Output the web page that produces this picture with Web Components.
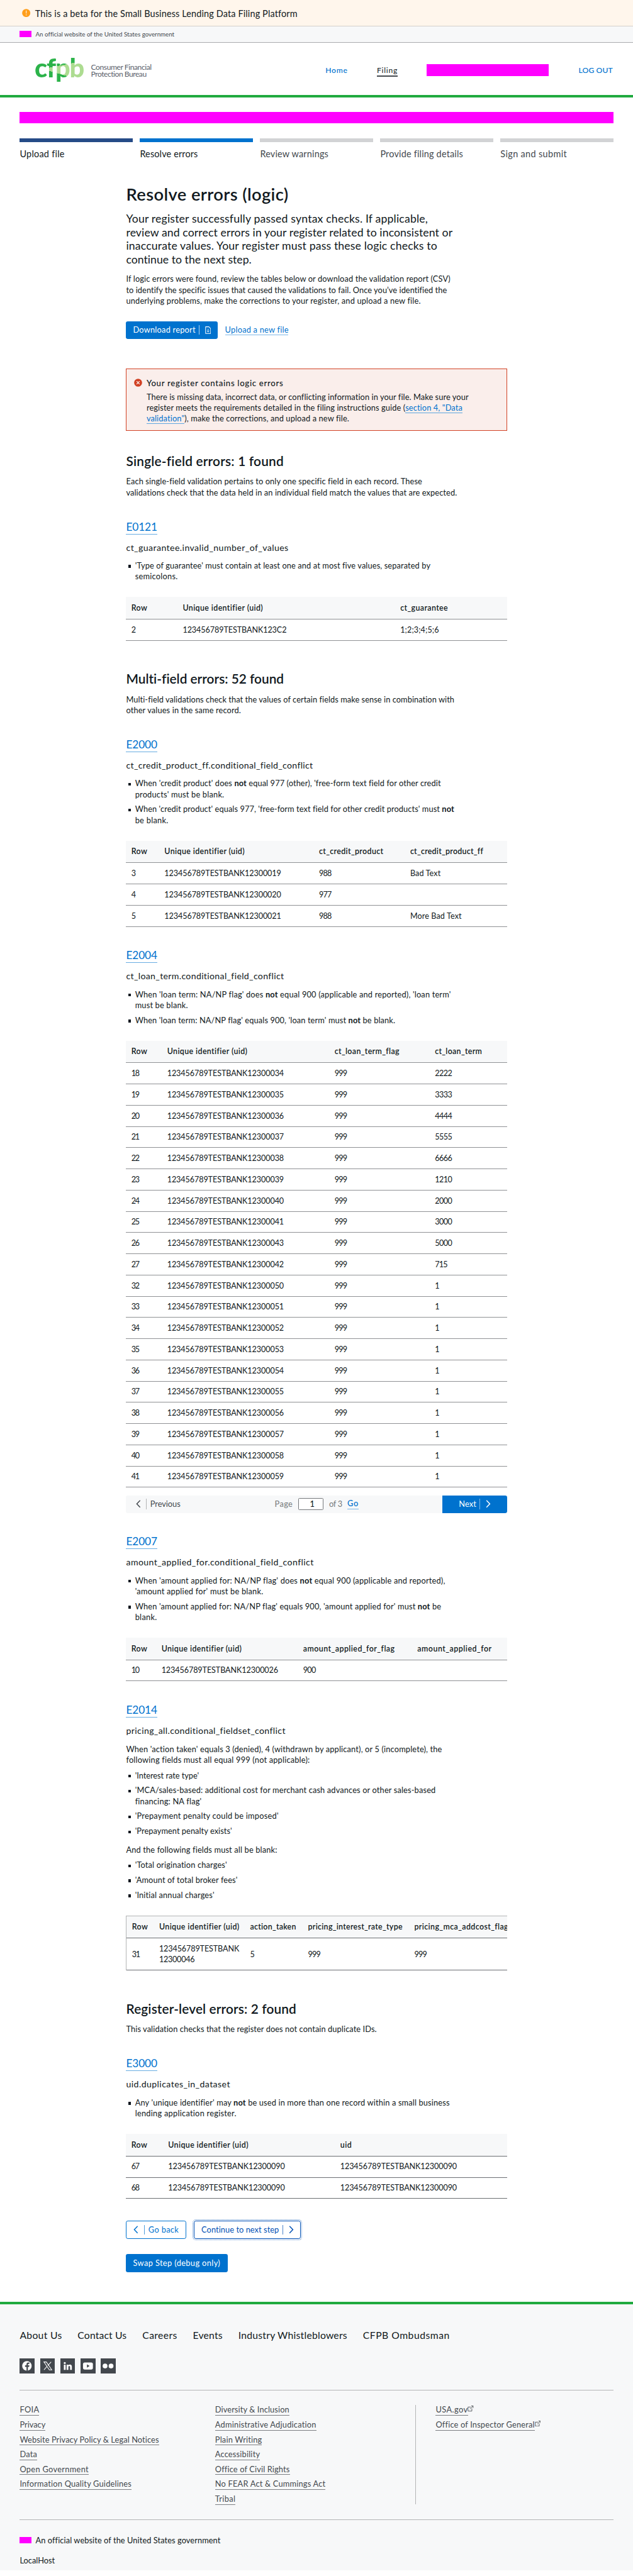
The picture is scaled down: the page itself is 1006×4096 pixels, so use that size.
<!DOCTYPE html>
<html lang="en">
<head>
<meta charset="utf-8">
<title>Small Business Lending Data Filing Platform</title>
<style>
/* 1rem stands for 100 design pixels */
html{font-size:78.58px;background:#fff}
body{margin:0;font-family:Lato,"Noto Sans",sans-serif;font-size:.163rem;line-height:.22rem;color:#101820;overflow-x:hidden}
</style>
</head>
<body>
<filing-page></filing-page>
<script>
const U = 0.7858;
const el = (name, html, ready) => customElements.define(name, class extends HTMLElement {
  connectedCallback() {
    if (this.shadowRoot) return;
    const root = this.attachShadow({ mode: 'open' });
    const t = document.createElement('template');
    t.innerHTML = typeof html === 'function' ? html(this) : html;
    root.append(t.content.cloneNode(true));
    if (ready) ready(this, root);
  }
});
const T = (text, w, extra = '') => `<fit-text w="${w}" ${extra}>${text}</fit-text>`;
const LINK = 'a{color:#0072ce;text-decoration:none;border-bottom:1px solid #5fa6df}';

/* A line of text tracked to a given width in design pixels */
el('fit-text', '<style>:host{display:block;width:max-content;white-space:nowrap}</style><slot></slot>', host => {
  const w = parseFloat(host.getAttribute('w')) * U;
  const n = host.textContent.length;
  if (!w || n < 2) return;
  host.style.letterSpacing = '0px';
  const natural = host.getBoundingClientRect().width;
  host.style.letterSpacing = ((w - natural) / (n - 1)).toFixed(4) + 'px';
  host.style.marginRight = (-(w - natural) / (n - 1)).toFixed(4) + 'px';
});

el('beta-banner', `<style>
:host{display:flex;align-items:center;height:.52rem;padding:0 .45rem;gap:.09rem;background:#fff6ec;border-bottom:1px solid #d3cfca;font-size:.184rem}
svg{width:.17rem;height:.17rem}
fit-text{padding-top:.02rem}</style>
<svg viewBox="0 0 17 17"><circle cx="8.5" cy="8.5" r="8.3" fill="#ff9e1b"/><path d="M8.5 3.6v6" stroke="#fff6ec" stroke-width="1.4"/><circle cx="8.5" cy="12.4" r="1" fill="#fff6ec"/></svg>
${T('This is a beta for the Small Business Lending Data Filing Platform', 530)}`);

el('gov-line', h => `<style>
:host{display:flex;align-items:center;gap:.08rem;box-sizing:border-box}
i{width:.24rem;height:.13rem;background:#f0f}</style><i></i>${T('An official website of the United States government', h.getAttribute('w'))}`);

el('site-logo', `<style>
:host{display:flex;align-items:flex-start;gap:.13rem;height:.51rem}
.m{font-weight:900;font-size:.53rem;line-height:.5rem;height:.7rem;width:1.01rem;color:transparent;margin-top:-.053rem;
background:conic-gradient(from 78.7deg at .17rem .275rem,#addc91 0 28deg,#2cb34a 28deg);-webkit-background-clip:text;background-clip:text}
.n{color:#5b616b;font-size:.154rem;line-height:.145rem;padding-top:.112rem}</style>
<div class="m">${T('cfpb', 101)}</div><div class="n">${T('Consumer Financial', 123)}${T('Protection Bureau', 113)}</div>`);

el('site-header', `<style>
:host{display:flex;justify-content:space-between;align-items:flex-start;box-sizing:border-box;height:1.108rem;padding:.305rem .41rem 0 .7rem;border-bottom:4px solid #20aa3f}
nav{display:flex;align-items:center;gap:.6rem;color:#0072ce;font-weight:500;font-size:.155rem;height:.5rem}
.on{color:#101820;font-weight:400;border-bottom:2px solid #43484e;padding-top:.02rem}
i{width:2.47rem;height:.25rem;background:#f0f}</style>
<site-logo></site-logo>
<nav>${T('Home', 44)}${T('Filing', 41, 'class="on"')}<i></i>${T('LOG OUT', 69)}</nav>`);

el('step-bar', `<style>
:host{display:grid;grid-template-columns:repeat(5,1fr);gap:.15rem;font-size:.184rem;line-height:.24rem;color:#43484e}
div{border-top:.08rem solid #d2d3d5;padding-top:.13rem}
.a{border-color:#254b87;color:#101820}.b{border-color:#0072ce;color:#101820}</style>
<div class="a">${T('Upload file', 90)}</div><div class="b">${T('Resolve errors', 117)}</div><div>${T('Review warnings', 138)}</div><div>${T('Provide filing details', 167)}</div><div>${T('Sign and submit', 134)}</div>`);

const CHEV_L = '<svg class="c" viewBox="0 0 10 16"><path d="M8.5 1 1.8 8l6.7 7" fill="none" stroke="currentColor" stroke-width="1.9"/></svg>';
const CHEV_R = '<svg class="c" viewBox="0 0 10 16"><path d="M1.5 1l6.7 7-6.7 7" fill="none" stroke="currentColor" stroke-width="1.9"/></svg>';
const DOC = '<svg class="d" viewBox="0 0 12 15"><path d="M1 .8h6.6L11.2 4.4v9.8H1z" fill="none" stroke="currentColor" stroke-width="1.3" stroke-linejoin="round"/><path d="M6.1 4.8v6.4M3.7 8.9l2.4 2.4 2.4-2.4" fill="none" stroke="currentColor" stroke-width="1.1"/></svg>';

el('push-button', h => {
  const k = h.getAttribute('icon'), t = T(h.getAttribute('label'), h.getAttribute('w')), bar = '<b></b>';
  const inner = k === 'left' ? CHEV_L + bar + t : k === 'right' ? t + bar + CHEV_R : k === 'doc' ? t + bar + DOC : t;
  return `<style>
:host{display:inline-flex;align-items:center;box-sizing:border-box;height:.364rem;width:var(--w);padding:0 0 0 .14rem;border-radius:.04rem;background:#0072ce;color:#fff}
:host([kind=line]){background:#fff;color:#0072ce;border:1px solid #0072ce}
:host([kind=focus]){background:#fff;color:#0050b4;border:1px solid #0050b4;outline:1px dotted #4d84ca;outline-offset:1px}
b,svg,fit-text{flex:none}
b{width:1px;height:.19rem;background:currentColor;margin:0 .07rem;opacity:.7}
.c{width:.1rem;height:.16rem}.c:first-of-type{margin-right:.045rem}.c:last-child{margin:0 0 0 .045rem}
.d{width:.12rem;height:.15rem;margin-left:.04rem}</style>${inner}`;
});

el('alert-box', `<style>
:host{display:flex;gap:.085rem;box-sizing:border-box;height:1.26rem;padding:.18rem .15rem 0;background:#faeeeb;border:1px solid #d14124}
svg{width:.165rem;height:.165rem;flex:none;margin-top:.013rem}
.h{font-weight:500;font-size:.168rem;margin-bottom:.058rem}${LINK}</style>
<svg viewBox="0 0 17 17"><circle cx="8.5" cy="8.5" r="8.3" fill="#d14124"/><path d="M5.4 5.4l6.2 6.2M11.6 5.4l-6.2 6.2" stroke="#fff" stroke-width="1.5"/></svg>
<div>${T('Your register contains logic errors', 276, 'class="h"')}
${T('There is missing data, incorrect data, or conflicting information in your file. Make sure your', 651.5)}
${T('register meets the requirements detailed in the filing instructions guide (<a>section 4, "Data</a>', 639)}
${T('<a>validation"</a>), make the corrections, and upload a new file.', 410)}</div>`);

/* Paragraph or bulleted item: lines come as [text, width] pairs */
const P = (...l) => `<text-block>${l.map(x => T(...x)).join('')}</text-block>`;
const LI = (...l) => `<bullet-item>${l.map(x => T(...x)).join('')}</bullet-item>`;
el('text-block', '<style>:host{display:block}</style><slot></slot>');
el('bullet-item', '<style>:host{display:flex;padding-left:.04rem}i{flex:none;width:.055rem;height:.055rem;background:#101820;margin:.095rem .086rem 0 0}</style><i></i><div><slot></slot></div>');

el('rule-head', h => `<style>
:host{display:block;padding-top:.443rem;margin-bottom:.155rem}
.e{font-size:.22rem;line-height:.28rem;color:#0072ce;border-bottom:1px solid #69ade2}
.n{font-size:.18rem;margin-top:.152rem}</style>
${T(h.getAttribute('code'), 63, 'class="e"')}${T(h.getAttribute('name'), h.getAttribute('w'), 'class="n"')}`);

el('section-title', h => `<style>
:host{display:block;font-size:.265rem;line-height:.32rem;font-weight:600;margin-bottom:.158rem}</style>${T(h.getAttribute('text'), h.getAttribute('w'))}`);

/* A cell is text|width; ~ separates the lines of a wrapped cell */
const cellWidth = t => /^\d+$/.test(t) ? t.length * 9 - 1 : t.length > 22 ? 236 : 210;
const cell = c => `<span>${c.split('~').filter(Boolean).map(l => {
  const [t, w] = l.split('|');
  return T(t, w || cellWidth(t));
}).join('')}</span>`;
/* rows: cells are separated by a comma, rows by a slash */
el('error-table', h => {
  const cols = h.getAttribute('cols').split(',').map(c => c === '*' ? '1fr' : c / 100 + 'rem').join(' ');
  const heads = h.getAttribute('heads').split(',');
  const rows = h.getAttribute('rows').split('/').map(r => r.split(','));
  return `<style>
:host{display:block;overflow:hidden;margin-top:.3rem;font-size:.16rem;--line:#8f9194}
:host([dark]){--line:#6b6e72}
:host([framed]){border-left:1px solid #b4b5b6;border-top:1px solid #b4b5b6}
.r,.h{display:grid;grid-template-columns:${cols};box-sizing:border-box;border-bottom:1px solid var(--line);align-items:center}
.h{height:.455rem;background:#f7f8f9;font-weight:600;font-size:.158rem}
.r{height:.4295rem}
:host([framed]) .r{height:.65rem}
span{padding-left:.105rem}</style>
<div class="h">${heads.map(cell).join('')}</div>${rows.map(r => `<div class="r">${r.map(cell).join('')}</div>`).join('')}`;
});

el('page-nav', `<style>
:host{display:grid;grid-template-columns:1fr 1fr 1fr;align-items:center;height:.356rem;margin-top:.155rem;background:#f7f8f9;border-radius:.04rem;overflow:hidden}
.p,.g,.x{display:flex;align-items:center}
.p{padding-left:.2rem;color:#43484e}.c{width:.1rem;height:.16rem}
.p b{width:1px;height:.22rem;background:#b4b5b6;margin:0 .07rem 0 .105rem}
.g{justify-content:center;color:#75787b}
.i{display:flex;align-items:center;justify-content:center;box-sizing:border-box;width:.52rem;height:.25rem;margin:0 .11rem;padding-left:.06rem;background:#fff;border:1px solid #75787b;border-radius:.02rem;color:#101820;font-weight:500}
.go{color:#0072ce;font-weight:500;border-bottom:1px solid #7fb8e6;line-height:.2rem;margin-left:.1rem}
.x{justify-self:end;box-sizing:border-box;width:1.3rem;height:.356rem;background:#0072ce;color:#fff;padding-left:.33rem}
.x b{width:1px;height:.22rem;background:#7fb8e6;margin:0 .11rem 0 .07rem}</style>
<div class="p">${CHEV_L}<b></b>${T('Previous', 61)}</div>
<div class="g">${T('Page', 36)}<div class="i">1</div>${T('of 3', 27)}${T('Go', 22, 'class="go"')}</div>
<div class="x">${T('Next', 35)}<b></b>${CHEV_R}</div>`);

const loan = [[18,34,2222],[19,35,3333],[20,36,4444],[21,37,5555],[22,38,6666],[23,39,1210],[24,40,2000],[25,41,3000],[26,43,5000],[27,42,715],
  ...[0,1,2,3,4,5,6,7,8,9].map(i => [32 + i, 50 + i, 1])].map(([r, u, v]) => `${r},123456789TESTBANK123000${u},999,${v}`).join('/');

el('filing-content', `<style>
:host{display:block;width:7.7rem;margin:.47rem auto 0;padding:0}
.h1{font-size:.348rem;line-height:.42rem;font-weight:600}
.lead{font-size:.225rem;line-height:.275rem;margin:.16rem 0 .15rem}
.act{display:flex;align-items:center;gap:.15rem;margin-top:.298rem}
.act a{border-bottom:1px solid #7fb8e6;color:#0072ce;line-height:.2rem}
alert-box{margin-top:.593rem}
section-title{padding-top:.444rem}
error-table+section-title{padding-top:.603rem}
bullet-item+bullet-item{margin-top:.083rem}
text-block+bullet-item{margin-top:.095rem}
bullet-item+text-block{margin-top:.152rem}
.end{display:flex;gap:.16rem;margin-top:.448rem}
.swap{margin-top:.305rem}</style>
${T('Resolve errors (logic)', 328, 'class="h1"')}
<div class="lead">${T('Your register successfully passed syntax checks. If applicable,', 610)}${T('review and correct errors in your register related to inconsistent or', 660)}${T('inaccurate values. Your register must pass these logic checks to', 629)}${T('continue to the next step.', 254)}</div>
${P(['If logic errors were found, review the tables below or download the validation report (CSV)', 656], ['to identify the specific issues that caused the validations to fail. Once you’ve identified the', 649], ['underlying problems, make the corrections to your register, and upload a new file.', 595.5])}
<div class="act"><push-button icon="doc" label="Download report" w="126" style="--w:1.85rem"></push-button><a>${T('Upload a new file', 128)}</a></div>
<alert-box></alert-box>
<section-title text="Single-field errors: 1 found" w="318"></section-title>
${P(['Each single-field validation pertains to only one specific field in each record. These', 598], ['validations check that the data held in an individual field match the values that are expected.', 669])}
<rule-head code="E0121" name="ct_guarantee.invalid_number_of_values" w="328"></rule-head>
${LI(["'Type of guarantee' must contain at least one and at most five values, separated by", 597], ['semicolons.', 86])}
<error-table cols="104,440,*" heads="Row|32,Unique identifier (uid)|162,ct_guarantee|96" rows="2,123456789TESTBANK123C2,1;2;3;4;5;6|78"></error-table>
<section-title text="Multi-field errors: 52 found" w="319"></section-title>
${P(['Multi-field validations check that the values of certain fields make sense in combination with', 664], ['other values in the same record.', 232])}
<rule-head code="E2000" name="ct_credit_product_ff.conditional_field_conflict" w="377"></rule-head>
${LI(["When 'credit product' does <b>not</b> equal 977 (other), 'free-form text field for other credit", 618], ["products' must be blank.", 180])}
${LI(["When 'credit product' equals 977, 'free-form text field for other credit products' must <b>not</b>", 645], ['be blank.', 67])}
<error-table cols="67,312.5,184.5,*" heads="Row|32,Unique identifier (uid)|162,ct_credit_product|130,ct_credit_product_ff|147" rows="3,123456789TESTBANK12300019,988,Bad Text|61.5/4,123456789TESTBANK12300020,977,/5,123456789TESTBANK12300021,988,More Bad Text|104"></error-table>
<rule-head code="E2004" name="ct_loan_term.conditional_field_conflict" w="319"></rule-head>
${LI(["When 'loan term: NA/NP flag' does <b>not</b> equal 900 (applicable and reported), 'loan term'", 638.5], ['must be blank.', 106.6])}
${LI(["When 'loan term: NA/NP flag' equals 900, 'loan term' must <b>not</b> be blank.", 526])}
<error-table cols="72.5,338.5,203,*" heads="Row|32,Unique identifier (uid)|162,ct_loan_term_flag|131,ct_loan_term|95" rows="${loan}"></error-table>
<page-nav></page-nav>
<rule-head code="E2007" name="amount_applied_for.conditional_field_conflict" w="379"></rule-head>
${LI(["When 'amount applied for: NA/NP flag' does <b>not</b> equal 900 (applicable and reported),", 627], ["'amount applied for' must be blank.", 259])}
${LI(["When 'amount applied for: NA/NP flag' equals 900, 'amount applied for' must <b>not</b> be", 619], ['blank.', 44])}
<error-table cols="61,286.5,231,*" heads="Row|32,Unique identifier (uid)|162,amount_applied_for_flag|185,amount_applied_for|150" rows="10,123456789TESTBANK12300026,900,"></error-table>
<rule-head code="E2014" name="pricing_all.conditional_fieldset_conflict" w="322"></rule-head>
${P(["When 'action taken' equals 3 (denied), 4 (withdrawn by applicant), or 5 (incomplete), the", 639], ['following fields must all equal 999 (not applicable):', 371])}
${LI(["'Interest rate type'", 129])}
${LI(["'MCA/sales-based: additional cost for merchant cash advances or other sales-based", 608], ["financing: NA flag'", 134])}
${LI(["'Prepayment penalty could be imposed'", 290])}
${LI(["'Prepayment penalty exists'", 196])}
${P(['And the following fields must all be blank:', 305])}
${LI(["'Total origination charges'", 186])}
${LI(["'Amount of total broker fees'", 207])}
${LI(["'Initial annual charges'", 160.5])}
<error-table dark framed cols="55,184,117,215,400" heads="Row|32,Unique identifier (uid)|162,action_taken|93,pricing_interest_rate_type|191,pricing_mca_addcost_flag|190" rows="31,123456789TESTBANK|162~12300046|72,5,999,999"></error-table>
<section-title text="Register-level errors: 2 found" w="344"></section-title>
${P(['This validation checks that the register does not contain duplicate IDs.', 507])}
<rule-head code="E3000" name="uid.duplicates_in_dataset" w="210"></rule-head>
${LI(["Any 'unique identifier' may <b>not</b> be used in more than one record within a small business", 636], ['lending application register.', 205])}
<error-table dark cols="74.5,348,*" heads="Row|32,Unique identifier (uid)|162,uid|23" rows="67,123456789TESTBANK12300090,123456789TESTBANK12300090/68,123456789TESTBANK12300090,123456789TESTBANK12300090"></error-table>
<div class="end"><push-button kind="line" icon="left" label="Go back" w="61" style="--w:1.21rem"></push-button><push-button kind="focus" icon="right" label="Continue to next step" w="157" style="--w:2.16rem"></push-button></div>
<div class="end swap"><push-button label="Swap Step (debug only)" w="176" style="--w:2.06rem"></push-button></div>`);

const SOCIAL = [
  '<circle cx="15" cy="15" r="9.6" fill="#fff"/><path d="M14.2 25v-8h-3v-3h3v-2.2q0-3.6 3.6-3.6h2.2v2.8h-1.6q-1.4 0-1.4 1.4V14h3l-.5 3H17v8z" fill="#43484e"/>',
  '<path d="M7.3 7h4.9l11 16h-4.9zM22 7l-6.7 7.3M13.8 16 7.6 23" fill="none" stroke="#fff" stroke-width="1.3"/>',
  '<path d="M7 12.5h3.6V23H7zM12.6 12.5H16V14q1-1.8 3.4-1.8 3.8 0 3.8 4.6V23h-3.6v-5.6q0-2.2-1.7-2.2-1.8 0-1.8 2.2V23h-3.5z" fill="#fff"/><circle cx="8.8" cy="9.2" r="2" fill="#fff"/>',
  '<rect x="5" y="8" width="20" height="14.5" rx="3.5" fill="#fff"/><path d="M13 12l5.4 3.2L13 18.5z" fill="#43484e"/>',
  '<circle cx="8.9" cy="15.2" r="4.9" fill="#fff"/><circle cx="21" cy="15.2" r="4.9" fill="#fff"/>'];
const EXT = '<svg viewBox="0 0 12 12"><path d="M6.6 3H1v8.2h7.8V6" fill="none" stroke="currentColor" stroke-width="1.1"/><path d="M4.8 7.4 11 1M7.6.7h3.7v4" fill="none" stroke="currentColor" stroke-width="1.1"/></svg>';
const links = (l, ext = '') => '<ul>' + l.map(([t, w]) => `<li>${T(t, w)}${ext}</li>`).join('') + '</ul>';

el('site-footer', `<style>
:host{display:block;margin-top:.6rem;border-top:4px solid #20aa3f;background:#f7f8f9;padding:.512rem .4rem .083rem}
nav{display:flex;gap:.38rem;font-size:.2rem;line-height:.24rem}
nav{gap:.32rem}
.s{display:flex;gap:.11rem;margin:.345rem 0 .33rem}
.s svg{width:.3rem;height:.303rem;background:#43484e}
hr{border:0;border-top:1px solid #b4b5b6;margin:0}
.l{display:grid;grid-template-columns:3.95rem 4.045rem 1fr;padding:.295rem 0 .3rem;color:#43484e}
.l>div:last-child{border-left:1px solid #b4b5b6;padding-left:.405rem}
ul{margin:0;padding:0;list-style:none;display:flex;flex-direction:column;gap:.08rem}
li{display:flex;align-items:flex-start;height:.22rem}
li fit-text{line-height:.2rem;padding-top:.008rem;border-bottom:1px solid #7c7f83}
li svg{flex:none;width:.12rem;height:.12rem;margin-top:.02rem}
gov-line{margin:.3rem 0 .195rem}</style>
<nav>${T('About Us', 85)}${T('Contact Us', 99)}${T('Careers', 70)}${T('Events', 60)}${T('Industry Whistleblowers', 220)}${T('CFPB Ombudsman', 175)}</nav>
<div class="s">${SOCIAL.map(s => `<svg viewBox="0 0 30 30">${s}</svg>`).join('')}</div><hr>
<div class="l"><div>${links([['FOIA', 39], ['Privacy', 52], ['Website Privacy Policy &amp; Legal Notices', 281.6], ['Data', 35], ['Open Government', 139], ['Information Quality Guidelines', 226]])}</div>
<div>${links([['Diversity &amp; Inclusion', 150], ['Administrative Adjudication', 205], ['Plain Writing', 95], ['Accessibility', 90.6], ['Office of Civil Rights', 150], ['No FEAR Act &amp; Cummings Act', 223], ['Tribal', 41]])}</div>
<div>${links([['USA.gov', 64.5], ['Office of Inspector General', 199]], EXT)}</div></div><hr>
<gov-line w="373"></gov-line>${T('LocalHost', 71)}`);

el('filing-page', `<style>
:host{display:block}
.gov{font-size:.124rem;height:.33rem;padding:0 .4rem;background:#f7f8f9;border-bottom:1px solid #a9abad;color:#43484e}
.bar{margin:.295rem .4rem .3rem;height:.23rem;background:#f0f}
step-bar{margin:0 .4rem}</style>
<beta-banner></beta-banner><gov-line class="gov" w="280"></gov-line><site-header></site-header>
<div class="bar"></div><step-bar></step-bar><filing-content></filing-content><site-footer></site-footer>`);
</script>
</body>
</html>
